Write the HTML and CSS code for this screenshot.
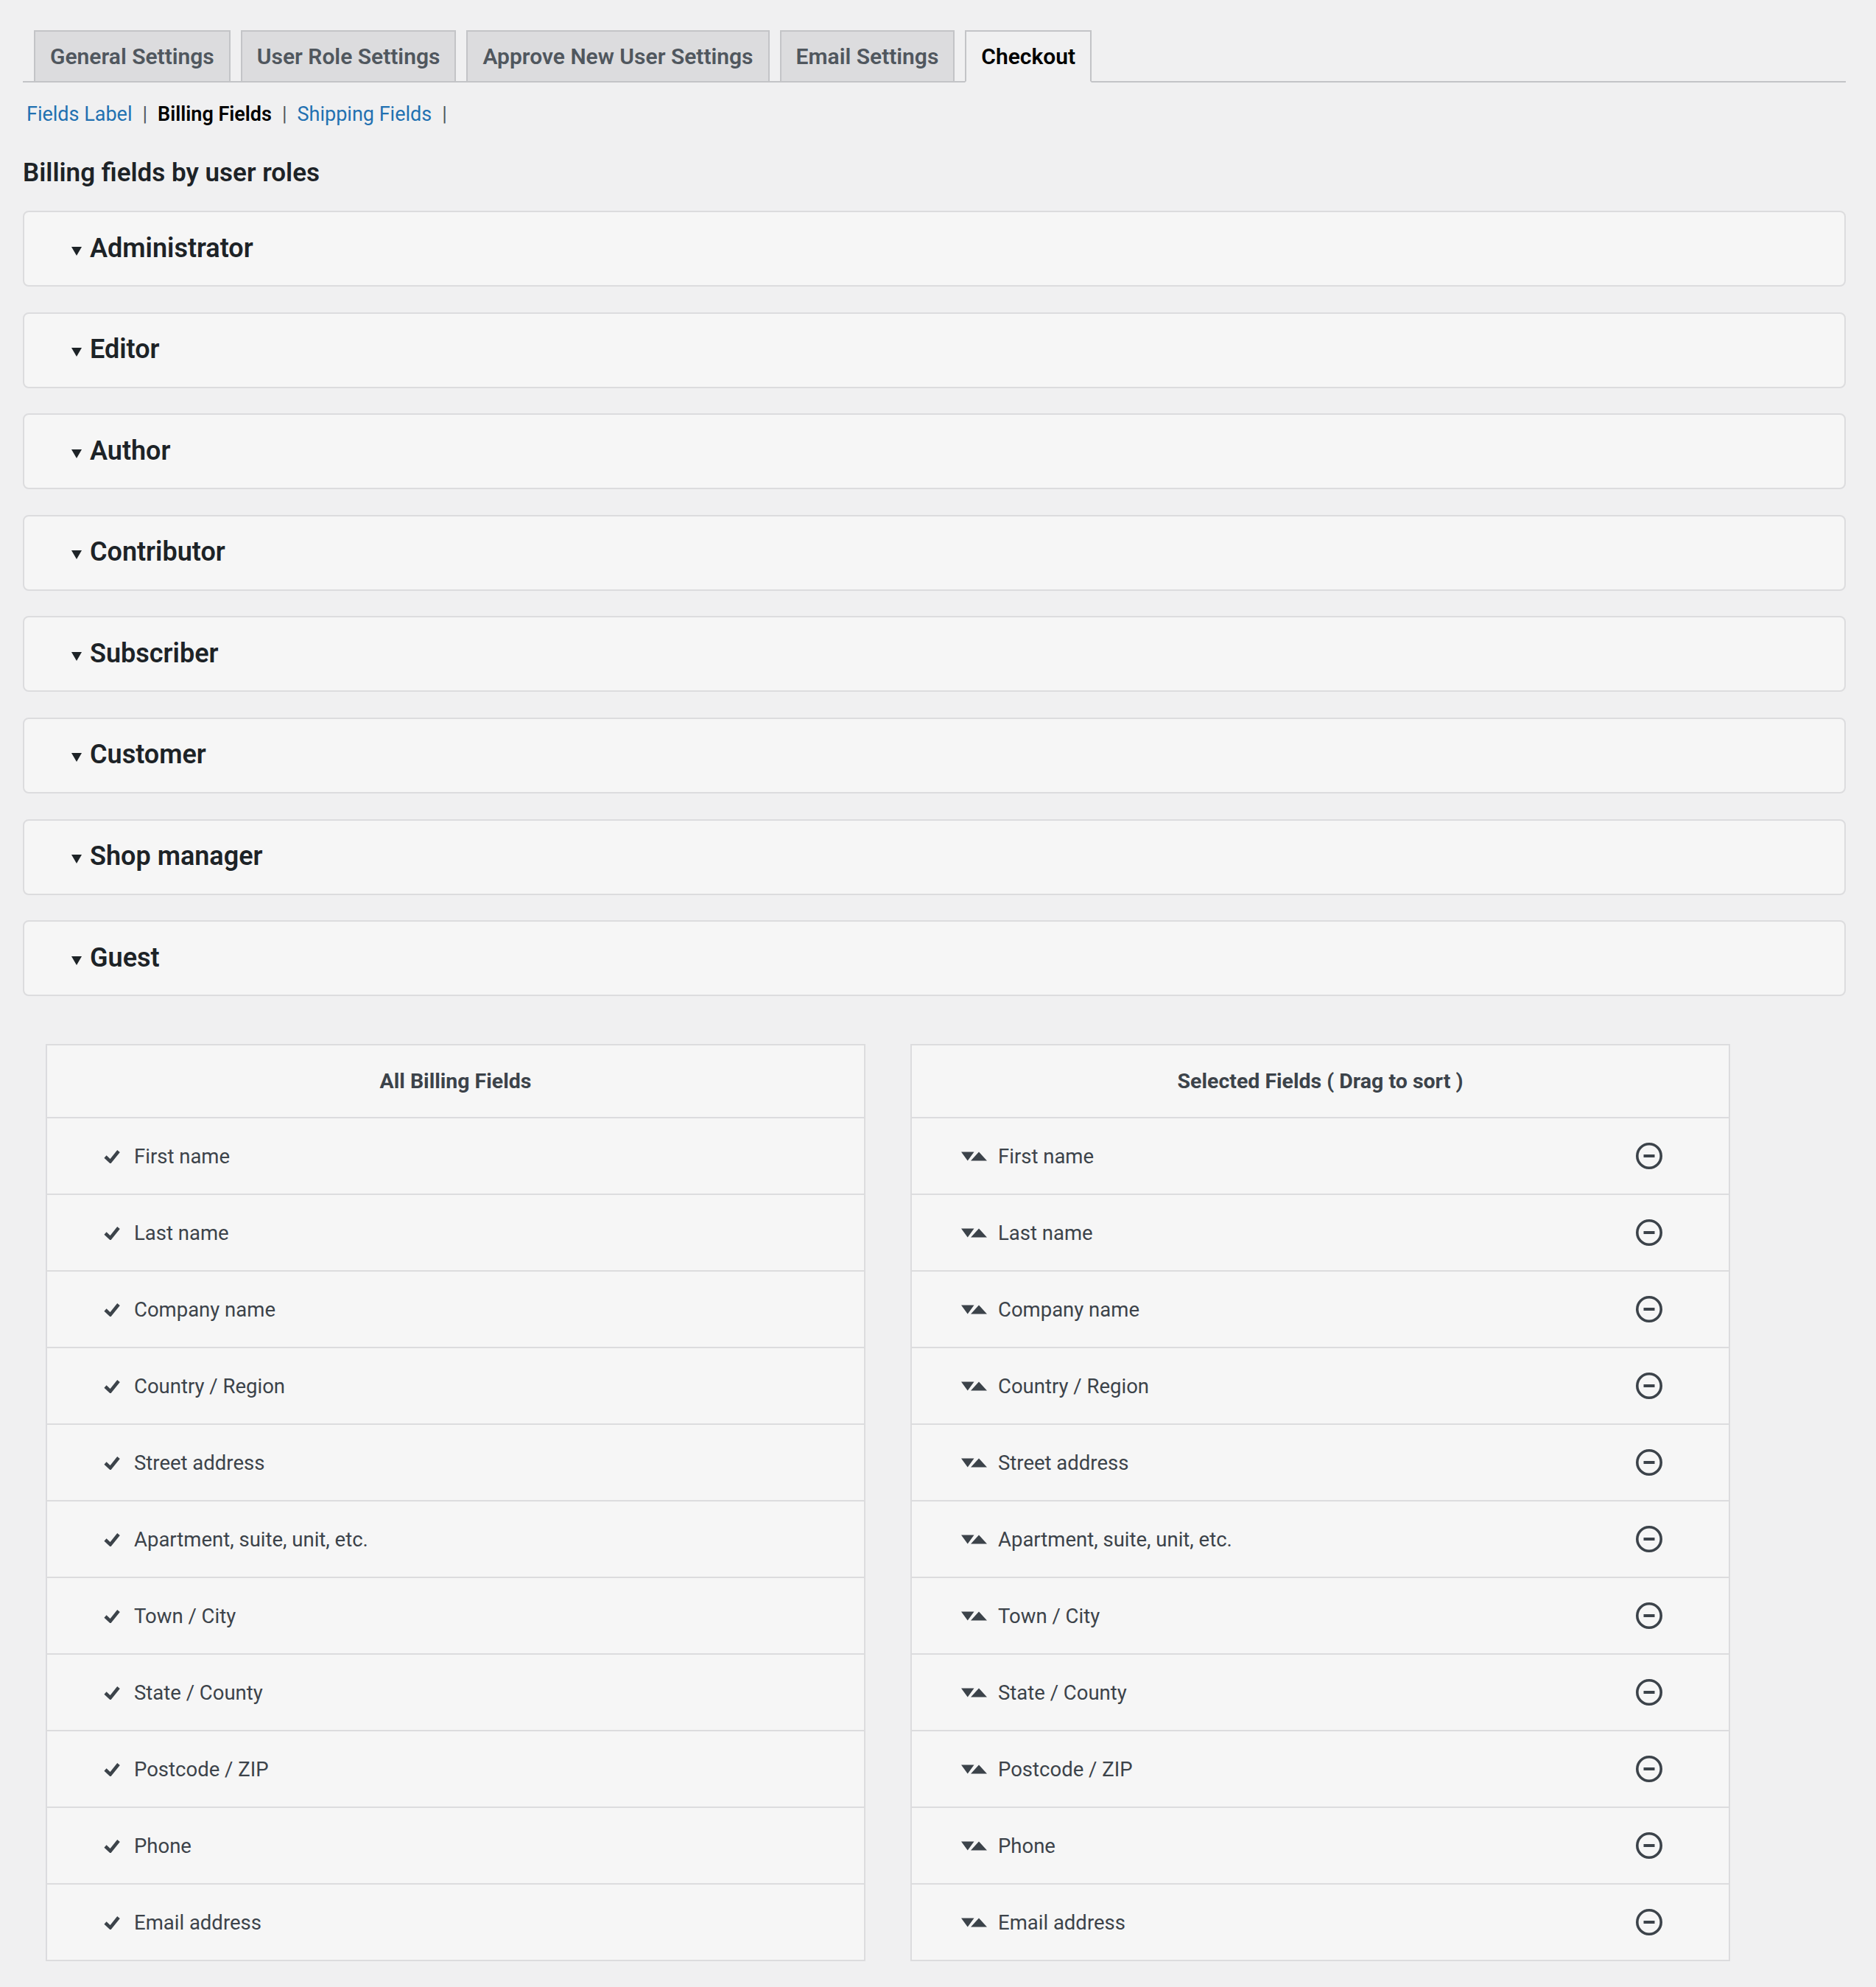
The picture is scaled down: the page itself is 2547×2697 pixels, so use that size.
FILE: index.html
```html
<!DOCTYPE html>
<html lang="en">
<head>
<meta charset="utf-8">
<title>Checkout – Billing Fields</title>
<link rel="stylesheet" href="styles.css">
</head>
<body>
<div class="wrap">
  <nav class="nav-tab-wrapper">
    <a class="nav-tab" href="#">General Settings</a>
    <a class="nav-tab" href="#">User Role Settings</a>
    <a class="nav-tab" href="#">Approve New User Settings</a>
    <a class="nav-tab" href="#">Email Settings</a>
    <a class="nav-tab nav-tab-active" href="#">Checkout</a>
  </nav>

  <ul class="subsubsub">
    <li><a href="#">Fields Label</a><span class="sep">|</span></li>
    <li><a class="current" href="#">Billing Fields</a><span class="sep">|</span></li>
    <li><a href="#">Shipping Fields</a><span class="sep">|</span></li>
  </ul>

  <h2 class="section-title">Billing fields by user roles</h2>

  <div class="roles">
    <div class="role-card"><span class="caret"></span><span class="role-name">Administrator</span></div>
    <div class="role-card"><span class="caret"></span><span class="role-name">Editor</span></div>
    <div class="role-card"><span class="caret"></span><span class="role-name">Author</span></div>
    <div class="role-card"><span class="caret"></span><span class="role-name">Contributor</span></div>
    <div class="role-card"><span class="caret"></span><span class="role-name">Subscriber</span></div>
    <div class="role-card"><span class="caret"></span><span class="role-name">Customer</span></div>
    <div class="role-card"><span class="caret"></span><span class="role-name">Shop manager</span></div>
    <div class="role-card"><span class="caret"></span><span class="role-name">Guest</span></div>
  </div>

  <div class="field-lists">
    <div class="field-table">
      <div class="field-head">All Billing Fields</div>
      <ul class="field-rows">
        <li class="field-row"><svg class="ico-check" viewBox="0 0 22 19"><path d="M2 10 L8.8 16.4 L20 2.5" fill="none" stroke="currentColor" stroke-width="4.6"/></svg><span>First name</span></li>
        <li class="field-row"><svg class="ico-check" viewBox="0 0 22 19"><path d="M2 10 L8.8 16.4 L20 2.5" fill="none" stroke="currentColor" stroke-width="4.6"/></svg><span>Last name</span></li>
        <li class="field-row"><svg class="ico-check" viewBox="0 0 22 19"><path d="M2 10 L8.8 16.4 L20 2.5" fill="none" stroke="currentColor" stroke-width="4.6"/></svg><span>Company name</span></li>
        <li class="field-row"><svg class="ico-check" viewBox="0 0 22 19"><path d="M2 10 L8.8 16.4 L20 2.5" fill="none" stroke="currentColor" stroke-width="4.6"/></svg><span>Country / Region</span></li>
        <li class="field-row"><svg class="ico-check" viewBox="0 0 22 19"><path d="M2 10 L8.8 16.4 L20 2.5" fill="none" stroke="currentColor" stroke-width="4.6"/></svg><span>Street address</span></li>
        <li class="field-row"><svg class="ico-check" viewBox="0 0 22 19"><path d="M2 10 L8.8 16.4 L20 2.5" fill="none" stroke="currentColor" stroke-width="4.6"/></svg><span>Apartment, suite, unit, etc.</span></li>
        <li class="field-row"><svg class="ico-check" viewBox="0 0 22 19"><path d="M2 10 L8.8 16.4 L20 2.5" fill="none" stroke="currentColor" stroke-width="4.6"/></svg><span>Town / City</span></li>
        <li class="field-row"><svg class="ico-check" viewBox="0 0 22 19"><path d="M2 10 L8.8 16.4 L20 2.5" fill="none" stroke="currentColor" stroke-width="4.6"/></svg><span>State / County</span></li>
        <li class="field-row"><svg class="ico-check" viewBox="0 0 22 19"><path d="M2 10 L8.8 16.4 L20 2.5" fill="none" stroke="currentColor" stroke-width="4.6"/></svg><span>Postcode / ZIP</span></li>
        <li class="field-row"><svg class="ico-check" viewBox="0 0 22 19"><path d="M2 10 L8.8 16.4 L20 2.5" fill="none" stroke="currentColor" stroke-width="4.6"/></svg><span>Phone</span></li>
        <li class="field-row"><svg class="ico-check" viewBox="0 0 22 19"><path d="M2 10 L8.8 16.4 L20 2.5" fill="none" stroke="currentColor" stroke-width="4.6"/></svg><span>Email address</span></li>
      </ul>
    </div>

    <div class="field-table">
      <div class="field-head">Selected Fields ( Drag to sort )</div>
      <ul class="field-rows">
        <li class="field-row sortable"><svg class="ico-sort" viewBox="0 0 36 13"><path d="M0 0.5 H17.5 L8.75 12.5 Z M13 12.5 L24 0.5 L35 12.5 Z" fill="currentColor"/></svg><span class="label">First name</span><svg class="ico-remove" viewBox="0 0 36 36"><circle cx="18" cy="18" r="16.2" fill="none" stroke="currentColor" stroke-width="3.6"/><rect x="10.5" y="16" width="15" height="4" fill="currentColor"/></svg></li>
        <li class="field-row sortable"><svg class="ico-sort" viewBox="0 0 36 13"><path d="M0 0.5 H17.5 L8.75 12.5 Z M13 12.5 L24 0.5 L35 12.5 Z" fill="currentColor"/></svg><span class="label">Last name</span><svg class="ico-remove" viewBox="0 0 36 36"><circle cx="18" cy="18" r="16.2" fill="none" stroke="currentColor" stroke-width="3.6"/><rect x="10.5" y="16" width="15" height="4" fill="currentColor"/></svg></li>
        <li class="field-row sortable"><svg class="ico-sort" viewBox="0 0 36 13"><path d="M0 0.5 H17.5 L8.75 12.5 Z M13 12.5 L24 0.5 L35 12.5 Z" fill="currentColor"/></svg><span class="label">Company name</span><svg class="ico-remove" viewBox="0 0 36 36"><circle cx="18" cy="18" r="16.2" fill="none" stroke="currentColor" stroke-width="3.6"/><rect x="10.5" y="16" width="15" height="4" fill="currentColor"/></svg></li>
        <li class="field-row sortable"><svg class="ico-sort" viewBox="0 0 36 13"><path d="M0 0.5 H17.5 L8.75 12.5 Z M13 12.5 L24 0.5 L35 12.5 Z" fill="currentColor"/></svg><span class="label">Country / Region</span><svg class="ico-remove" viewBox="0 0 36 36"><circle cx="18" cy="18" r="16.2" fill="none" stroke="currentColor" stroke-width="3.6"/><rect x="10.5" y="16" width="15" height="4" fill="currentColor"/></svg></li>
        <li class="field-row sortable"><svg class="ico-sort" viewBox="0 0 36 13"><path d="M0 0.5 H17.5 L8.75 12.5 Z M13 12.5 L24 0.5 L35 12.5 Z" fill="currentColor"/></svg><span class="label">Street address</span><svg class="ico-remove" viewBox="0 0 36 36"><circle cx="18" cy="18" r="16.2" fill="none" stroke="currentColor" stroke-width="3.6"/><rect x="10.5" y="16" width="15" height="4" fill="currentColor"/></svg></li>
        <li class="field-row sortable"><svg class="ico-sort" viewBox="0 0 36 13"><path d="M0 0.5 H17.5 L8.75 12.5 Z M13 12.5 L24 0.5 L35 12.5 Z" fill="currentColor"/></svg><span class="label">Apartment, suite, unit, etc.</span><svg class="ico-remove" viewBox="0 0 36 36"><circle cx="18" cy="18" r="16.2" fill="none" stroke="currentColor" stroke-width="3.6"/><rect x="10.5" y="16" width="15" height="4" fill="currentColor"/></svg></li>
        <li class="field-row sortable"><svg class="ico-sort" viewBox="0 0 36 13"><path d="M0 0.5 H17.5 L8.75 12.5 Z M13 12.5 L24 0.5 L35 12.5 Z" fill="currentColor"/></svg><span class="label">Town / City</span><svg class="ico-remove" viewBox="0 0 36 36"><circle cx="18" cy="18" r="16.2" fill="none" stroke="currentColor" stroke-width="3.6"/><rect x="10.5" y="16" width="15" height="4" fill="currentColor"/></svg></li>
        <li class="field-row sortable"><svg class="ico-sort" viewBox="0 0 36 13"><path d="M0 0.5 H17.5 L8.75 12.5 Z M13 12.5 L24 0.5 L35 12.5 Z" fill="currentColor"/></svg><span class="label">State / County</span><svg class="ico-remove" viewBox="0 0 36 36"><circle cx="18" cy="18" r="16.2" fill="none" stroke="currentColor" stroke-width="3.6"/><rect x="10.5" y="16" width="15" height="4" fill="currentColor"/></svg></li>
        <li class="field-row sortable"><svg class="ico-sort" viewBox="0 0 36 13"><path d="M0 0.5 H17.5 L8.75 12.5 Z M13 12.5 L24 0.5 L35 12.5 Z" fill="currentColor"/></svg><span class="label">Postcode / ZIP</span><svg class="ico-remove" viewBox="0 0 36 36"><circle cx="18" cy="18" r="16.2" fill="none" stroke="currentColor" stroke-width="3.6"/><rect x="10.5" y="16" width="15" height="4" fill="currentColor"/></svg></li>
        <li class="field-row sortable"><svg class="ico-sort" viewBox="0 0 36 13"><path d="M0 0.5 H17.5 L8.75 12.5 Z M13 12.5 L24 0.5 L35 12.5 Z" fill="currentColor"/></svg><span class="label">Phone</span><svg class="ico-remove" viewBox="0 0 36 36"><circle cx="18" cy="18" r="16.2" fill="none" stroke="currentColor" stroke-width="3.6"/><rect x="10.5" y="16" width="15" height="4" fill="currentColor"/></svg></li>
        <li class="field-row sortable"><svg class="ico-sort" viewBox="0 0 36 13"><path d="M0 0.5 H17.5 L8.75 12.5 Z M13 12.5 L24 0.5 L35 12.5 Z" fill="currentColor"/></svg><span class="label">Email address</span><svg class="ico-remove" viewBox="0 0 36 36"><circle cx="18" cy="18" r="16.2" fill="none" stroke="currentColor" stroke-width="3.6"/><rect x="10.5" y="16" width="15" height="4" fill="currentColor"/></svg></li>
      </ul>
    </div>
  </div>
</div>
</body>
</html>
```

FILE: styles.css
```css
* { box-sizing: border-box; }

html, body {
  margin: 0;
  padding: 0;
  background: #f0f0f1;
}

body {
  font-family: Roboto, "Liberation Sans", Arial, sans-serif;
  color: #3c434a;
  font-size: 26px;
}

.wrap {
  margin: 0 41px 0 31px;
  padding-top: 41px;
  padding-bottom: 36px;
}

/* ---------- Tabs ---------- */
.nav-tab-wrapper {
  display: flex;
  align-items: flex-end;
  border-bottom: 2px solid #c3c4c7;
  padding-left: 15px;
  gap: 14px;
}

.nav-tab {
  display: block;
  border: 2px solid #c3c4c7;
  border-bottom: none;
  background: #dcdcde;
  color: #50575e;
  font-size: 30px;
  font-weight: 600;
  line-height: 47px;
  padding: 10px 20px;
  text-decoration: none;
  white-space: nowrap;
}

.nav-tab-active {
  background: #f0f0f1;
  color: #000;
  border-bottom: 2px solid #f0f0f1;
  margin-bottom: -2px;
}

/* ---------- Sub navigation ---------- */
.subsubsub {
  list-style: none;
  margin: 17px 0 0 0;
  padding: 0 0 0 5px;
  display: flex;
  font-size: 27px;
  line-height: 52px;
  color: #50575e;
}

.subsubsub a {
  color: #2271b1;
  text-decoration: none;
}

.subsubsub a.current {
  color: #000;
  font-weight: 600;
}

.subsubsub .sep {
  display: inline-block;
  padding: 0 14px;
}

/* ---------- Heading ---------- */
.section-title {
  margin: 30px 0 27px 0;
  font-size: 35px;
  line-height: 48px;
  font-weight: 600;
  color: #1d2327;
}

/* ---------- Role cards ---------- */
.roles {
  display: flex;
  flex-direction: column;
  gap: 34.6px;
}

.role-card {
  height: 103px;
  display: flex;
  align-items: center;
  padding-left: 64px;
  background: #f6f6f6;
  border: 2px solid #dcdcde;
  border-radius: 8px;
}

.caret {
  width: 0;
  height: 0;
  border-left: 7.5px solid transparent;
  border-right: 7.5px solid transparent;
  border-top: 12px solid #1d2327;
  margin-top: 6px;
  margin-right: 11px;
}

.role-name {
  font-size: 36px;
  font-weight: 600;
  color: #1d2327;
  line-height: 48px;
  margin-top: -2px;
}

/* ---------- Field tables ---------- */
.field-lists {
  display: flex;
  gap: 61px;
  margin-top: 65px;
  padding-left: 31px;
}

.field-table {
  width: 1113px;
  background: #f6f6f6;
  border: 2px solid #dcdcde;
}

.field-head {
  height: 97px;
  display: flex;
  align-items: center;
  justify-content: center;
  font-weight: 700;
  font-size: 28.5px;
  color: #3c434a;
}

.field-rows {
  list-style: none;
  margin: 0;
  padding: 0;
}

.field-row {
  height: 104px;
  border-top: 2px solid #dcdcde;
  display: flex;
  align-items: center;
  padding-left: 77px;
  font-size: 27.5px;
  color: #3c434a;
}

.ico-check {
  width: 22px;
  height: 19px;
  margin-right: 19px;
  flex: none;
}

.field-row.sortable {
  padding-left: 67px;
  padding-right: 90px;
}

.ico-sort {
  width: 36px;
  height: 13px;
  margin-right: 14px;
  flex: none;
}

.field-row .label {
  flex: 1;
}

.ico-remove {
  width: 36px;
  height: 36px;
  flex: none;
}
```
